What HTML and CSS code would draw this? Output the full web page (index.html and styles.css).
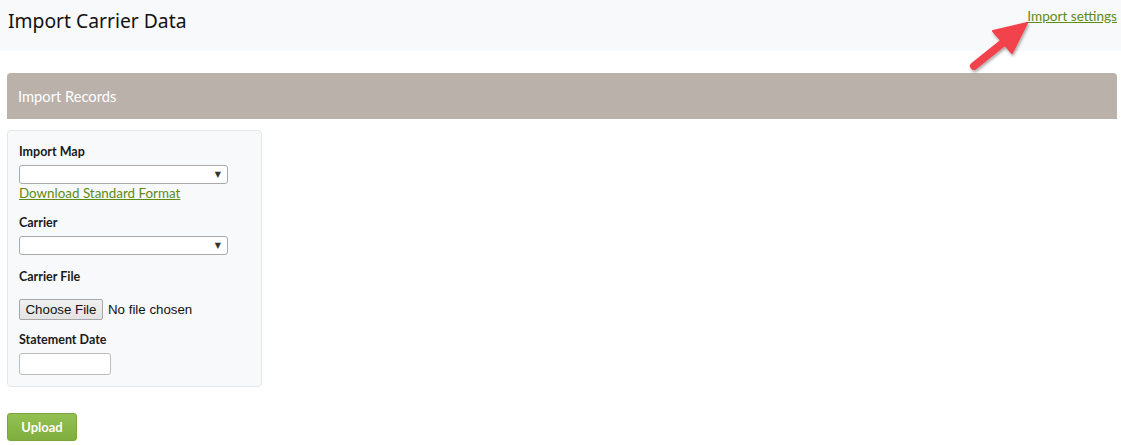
FILE: index.html
```html
<!DOCTYPE html>
<html lang="en">
<head>
<meta charset="utf-8">
<title>Import Carrier Data</title>
<link rel="stylesheet" href="styles.css">
</head>
<body>
<header class="page-head">
  <h1 class="page-title">Import Carrier Data</h1>
  <a class="settings-link" href="#">Import settings</a>
  <svg class="callout-arrow" width="70" height="60" viewBox="0 0 70 60" aria-hidden="true">
    <defs>
      <filter id="arrowShadow" x="-20%" y="-20%" width="150%" height="150%">
        <feDropShadow dx="1" dy="2" stdDeviation="1.5" flood-color="#000" flood-opacity="0.35"/>
      </filter>
    </defs>
    <g filter="url(#arrowShadow)">
      <line x1="8" y1="48" x2="38" y2="24" stroke="#f2424c" stroke-width="8" stroke-linecap="round"/>
      <polygon points="61,5 27,13 46,35" fill="#f2424c" stroke="#f2424c" stroke-width="2" stroke-linejoin="round"/>
    </g>
  </svg>
</header>

<main class="content">
  <section class="panel">
    <h2 class="panel-title">Import Records</h2>
  </section>

  <form class="import-form">
    <div class="form-box">
      <label class="field-label lbl-map">Import Map</label>
      <div class="select-box sel-map"><span class="caret">&#9660;</span></div>
      <a class="format-link" href="#">Download Standard Format</a>

      <label class="field-label lbl-carrier">Carrier</label>
      <div class="select-box sel-carrier"><span class="caret">&#9660;</span></div>

      <label class="field-label lbl-file">Carrier File</label>
      <div class="file-row">
        <span class="file-btn">Choose File</span>
        <span class="file-name">No file chosen</span>
      </div>

      <label class="field-label lbl-date">Statement Date</label>
      <div class="date-box"></div>
    </div>

    <button type="button" class="upload-btn">Upload</button>
  </form>
</main>
</body>
</html>
```

FILE: styles.css
```css
html, body {
  margin: 0;
  padding: 0;
  background: #ffffff;
  font-family: "Lato", "Liberation Sans", sans-serif;
  color: #222;
}

.page-head {
  position: relative;
  height: 51px;
  background: #f8f9fb;
  display: flex;
  align-items: flex-start;
  justify-content: space-between;
}

.page-title {
  margin: 8px 0 0 8px;
  font-family: "Noto Sans", "Open Sans", sans-serif;
  font-weight: 400;
  font-size: 19.3px;
  line-height: 26px;
  color: #111;
}

.settings-link {
  margin: 6px 4px 0 0;
  font-size: 13.6px;
  line-height: 20px;
  color: #5d8b14;
  text-decoration: underline;
}

.callout-arrow {
  position: absolute;
  left: 966px;
  top: 18px;
  overflow: visible;
}

.content {
  padding: 22px 4px 0 7px;
}

.panel {
  background: #b9b1aa;
  border-radius: 4px 4px 0 0;
  height: 46px;
  display: flex;
  align-items: center;
}

.panel-title {
  margin: 0 0 0 11px;
  font-size: 14.7px;
  font-weight: 400;
  color: #ffffff;
}

.import-form {
  padding-top: 11px;
}

.form-box {
  width: 231px;
  background: #f8f9fa;
  border: 1px solid #e6e7e8;
  border-radius: 4px;
  padding: 12px 11px 11px 11px;
  display: flex;
  flex-direction: column;
  align-items: flex-start;
}

.field-label {
  font-size: 12.5px;
  font-weight: 700;
  line-height: 18px;
  color: #1a1a1a;
}

.lbl-carrier { margin-top: 11px; }
.lbl-file { margin-top: 13px; }
.lbl-date { margin-top: 11px; }

.select-box {
  box-sizing: border-box;
  width: 209px;
  height: 19px;
  margin-top: 4px;
  background: #ffffff;
  border: 1px solid #a9a9a9;
  border-radius: 3px;
  display: flex;
  justify-content: flex-end;
  align-items: center;
}

.caret {
  font-family: "DejaVu Sans", sans-serif;
  font-size: 8px;
  color: #333;
  margin-right: 6px;
}

.format-link {
  font-size: 13.4px;
  line-height: 19px;
  color: #5d8b14;
  text-decoration: underline;
}

.file-row {
  margin-top: 13px;
  display: flex;
  align-items: center;
  gap: 5px;
  font-family: "Liberation Sans", Arial, sans-serif;
  font-size: 13.3px;
}

.file-btn {
  box-sizing: border-box;
  height: 21px;
  width: 84px;
  display: flex;
  align-items: center;
  justify-content: center;
  background: linear-gradient(#f0f0f0, #e3e3e3);
  border: 1px solid #a6a6a6;
  border-radius: 2px;
  color: #111;
}

.file-name {
  color: #111;
}

.date-box {
  box-sizing: border-box;
  width: 92px;
  height: 22px;
  margin-top: 4px;
  background: #fff;
  border: 1px solid #bcbcbc;
  border-radius: 3px;
}

.upload-btn {
  margin-top: 26px;
  width: 70px;
  height: 28px;
  border: 1px solid #7aa63c;
  border-radius: 3px;
  background: linear-gradient(#92c052, #7fae3e);
  color: #ffffff;
  font-family: "Lato", "Liberation Sans", sans-serif;
  font-size: 13px;
  font-weight: 700;
  padding: 0;
}
```
